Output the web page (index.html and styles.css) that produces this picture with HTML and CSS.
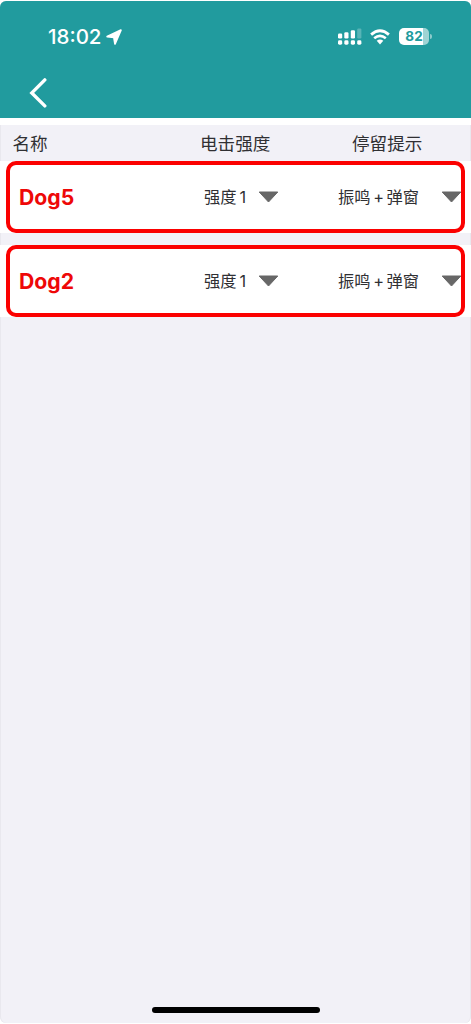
FILE: index.html
```
<!DOCTYPE html>
<html lang="zh-CN">
<head>
    <meta charset="UTF-8">
    <meta name="viewport" content="width=device-width, initial-scale=1.0">
    <title>电击强度</title>
    <link rel="stylesheet" href="styles.css">
</head>
<body>
    <div class="screen">
        <header class="header">
            <div class="status-bar">
                <span class="time">18:02</span>
                <svg class="location" width="16" height="16" viewBox="0 0 16 16">
                    <path d="M14.9 1.1 L9 14.8 L7.9 8.3 L1.2 7.6 Z" fill="#fff" stroke="#fff" stroke-width="1.8" stroke-linejoin="round"/>
                </svg>
                <svg class="signal" width="24" height="18" viewBox="0 0 24 18" fill="#fff">
                    <rect x="0" y="5.5" width="4.2" height="5" rx="1.2"/>
                    <rect x="6.3" y="4.3" width="4.2" height="6.2" rx="1.2"/>
                    <rect x="12.8" y="2.2" width="4.2" height="8.3" rx="1.2"/>
                    <rect x="19.2" y="0.5" width="4.2" height="10" rx="1.2" opacity="0.25"/>
                    <rect x="0" y="12.3" width="4.2" height="4.4" rx="1.4"/>
                    <rect x="6.3" y="12.3" width="4.2" height="4.4" rx="1.4"/>
                    <rect x="12.8" y="12.3" width="4.2" height="4.4" rx="1.4"/>
                    <rect x="19.2" y="12.3" width="4.2" height="4.4" rx="1.4"/>
                </svg>
                <svg class="wifi" width="20" height="16" viewBox="0 0 20 16">
                    <path d="M1.1 5.6 Q10 -2.2 18.9 5.6" fill="none" stroke="#fff" stroke-width="2.8"/>
                    <path d="M4.2 9.2 Q10 4.4 15.8 9.2" fill="none" stroke="#fff" stroke-width="2.6"/>
                    <path d="M6.7 11.8 Q10 9.2 13.3 11.8 L10 15.4 Z" fill="#fff"/>
                </svg>
                <div class="battery"><span class="battery-level">82</span></div>
            </div>
            <a class="back" href="#">
                <svg width="18" height="30" viewBox="0 0 18 30">
                    <path d="M15.8 1.9 L2.8 14.9 L15.8 27.9" fill="none" stroke="#fff" stroke-width="3.4" stroke-linecap="round" stroke-linejoin="miter"/>
                </svg>
            </a>
        </header>

        <div class="columns">
            <span>名称</span>
            <span>电击强度</span>
            <span>停留提示</span>
        </div>

        <ul class="list">
            <li class="item">
                <div class="card">
                    <span class="name">Dog5</span>
                    <div class="select level">强度<span class="num">1</span><svg class="caret" width="21" height="12" viewBox="0 0 21 12"><path d="M1.2 1 H19.8 L10.5 11 Z"/></svg></div>
                    <div class="select alert">振鸣<span class="plus">+</span>弹窗<svg class="caret" width="21" height="12" viewBox="0 0 21 12"><path d="M1.2 1 H19.8 L10.5 11 Z"/></svg></div>
                </div>
            </li>
            <li class="item">
                <div class="card">
                    <span class="name">Dog2</span>
                    <div class="select level">强度<span class="num">1</span><svg class="caret" width="21" height="12" viewBox="0 0 21 12"><path d="M1.2 1 H19.8 L10.5 11 Z"/></svg></div>
                    <div class="select alert">振鸣<span class="plus">+</span>弹窗<svg class="caret" width="21" height="12" viewBox="0 0 21 12"><path d="M1.2 1 H19.8 L10.5 11 Z"/></svg></div>
                </div>
            </li>
        </ul>

        <div class="home-indicator"></div>
    </div>
</body>
</html>
```
FILE: styles.css
```
:root {
    --primary-color: #219b9e;
    --page-color: #f2f1f7;
    --accent-color: #fb0000;
    --text-color: #303033;
}

* {
    margin: 0;
    padding: 0;
    box-sizing: border-box;
}

body {
    font-family: Inter, "Noto Sans CJK SC", sans-serif;
    color: var(--text-color);
    background-color: #fff;
    height: 1024px;
    padding: 1px 0;
    overflow: hidden;
}

.screen {
    display: flex;
    flex-direction: column;
    height: 1022px;
    border-radius: 6px;
    background-color: var(--page-color);
    box-shadow: inset 1px 0 #e9e8ee, inset -1px 0 #e9e8ee;
    overflow: hidden;
}

.header {
    height: 117px;
    background-color: var(--primary-color);
    flex-shrink: 0;
}

.status-bar {
    display: flex;
    align-items: center;
    height: 70px;
    padding: 1px 42px 0 48px;
    color: #fff;
}

.time {
    width: 57px;
    font-size: 20.5px;
    font-weight: 500;
    line-height: 24px;
    padding-top: 1px;
}

.location {
    margin-left: 1px;
    margin-right: auto;
}

.wifi {
    margin: 0 9px 0 8px;
}

.battery {
    position: relative;
    width: 30px;
    height: 17px;
    border-radius: 5px;
    background: linear-gradient(to right, #fff 24px, #9fd3d4 24px);
}

.battery::after {
    content: "";
    position: absolute;
    right: -3px;
    top: 6px;
    width: 2px;
    height: 5px;
    border-radius: 0 2px 2px 0;
    background-color: #8dcacb;
}

.battery-level {
    display: block;
    color: var(--primary-color);
    font-size: 13.5px;
    font-weight: 700;
    line-height: 17px;
    text-align: center;
}

.back {
    display: block;
    width: 18px;
    height: 30px;
    margin: 7px 0 0 29px;
}

.back svg {
    display: block;
}

.columns {
    display: grid;
    grid-template-columns: 187.5px 152px 1fr;
    align-items: center;
    height: 43px;
    padding: 1px 0 0 12.5px;
    border-top: 7px solid #fff;
    font-size: 17.6px;
    line-height: 35px;
    flex-shrink: 0;
}

.list {
    list-style-type: none;
}

.item {
    height: 72px;
    margin-bottom: 12px;
    padding: 0 6px;
    background-color: #fff;
}

.card {
    display: grid;
    grid-template-columns: 185px 134px 1fr;
    align-items: center;
    width: 459px;
    height: 72px;
    padding-left: 9px;
    border: 4px solid var(--accent-color);
    border-radius: 10px;
    overflow: hidden;
}

.name {
    color: #ee0808;
    font-size: 21.2px;
    font-weight: 700;
}

.select {
    display: flex;
    align-items: center;
    font-size: 16.3px;
    line-height: 24px;
    white-space: nowrap;
}

.num {
    width: 11px;
    margin-left: 3px;
}

.plus {
    width: 16px;
    text-align: center;
}

.caret {
    flex-shrink: 0;
    fill: #676767;
    stroke: #676767;
    stroke-width: 1;
    stroke-linejoin: round;
}

.level .caret {
    margin-left: 7px;
}

.alert .caret {
    margin-left: 22px;
}

.home-indicator {
    width: 168px;
    height: 6px;
    margin: auto auto 10px;
    border-radius: 3px;
    background-color: #000;
}
```
